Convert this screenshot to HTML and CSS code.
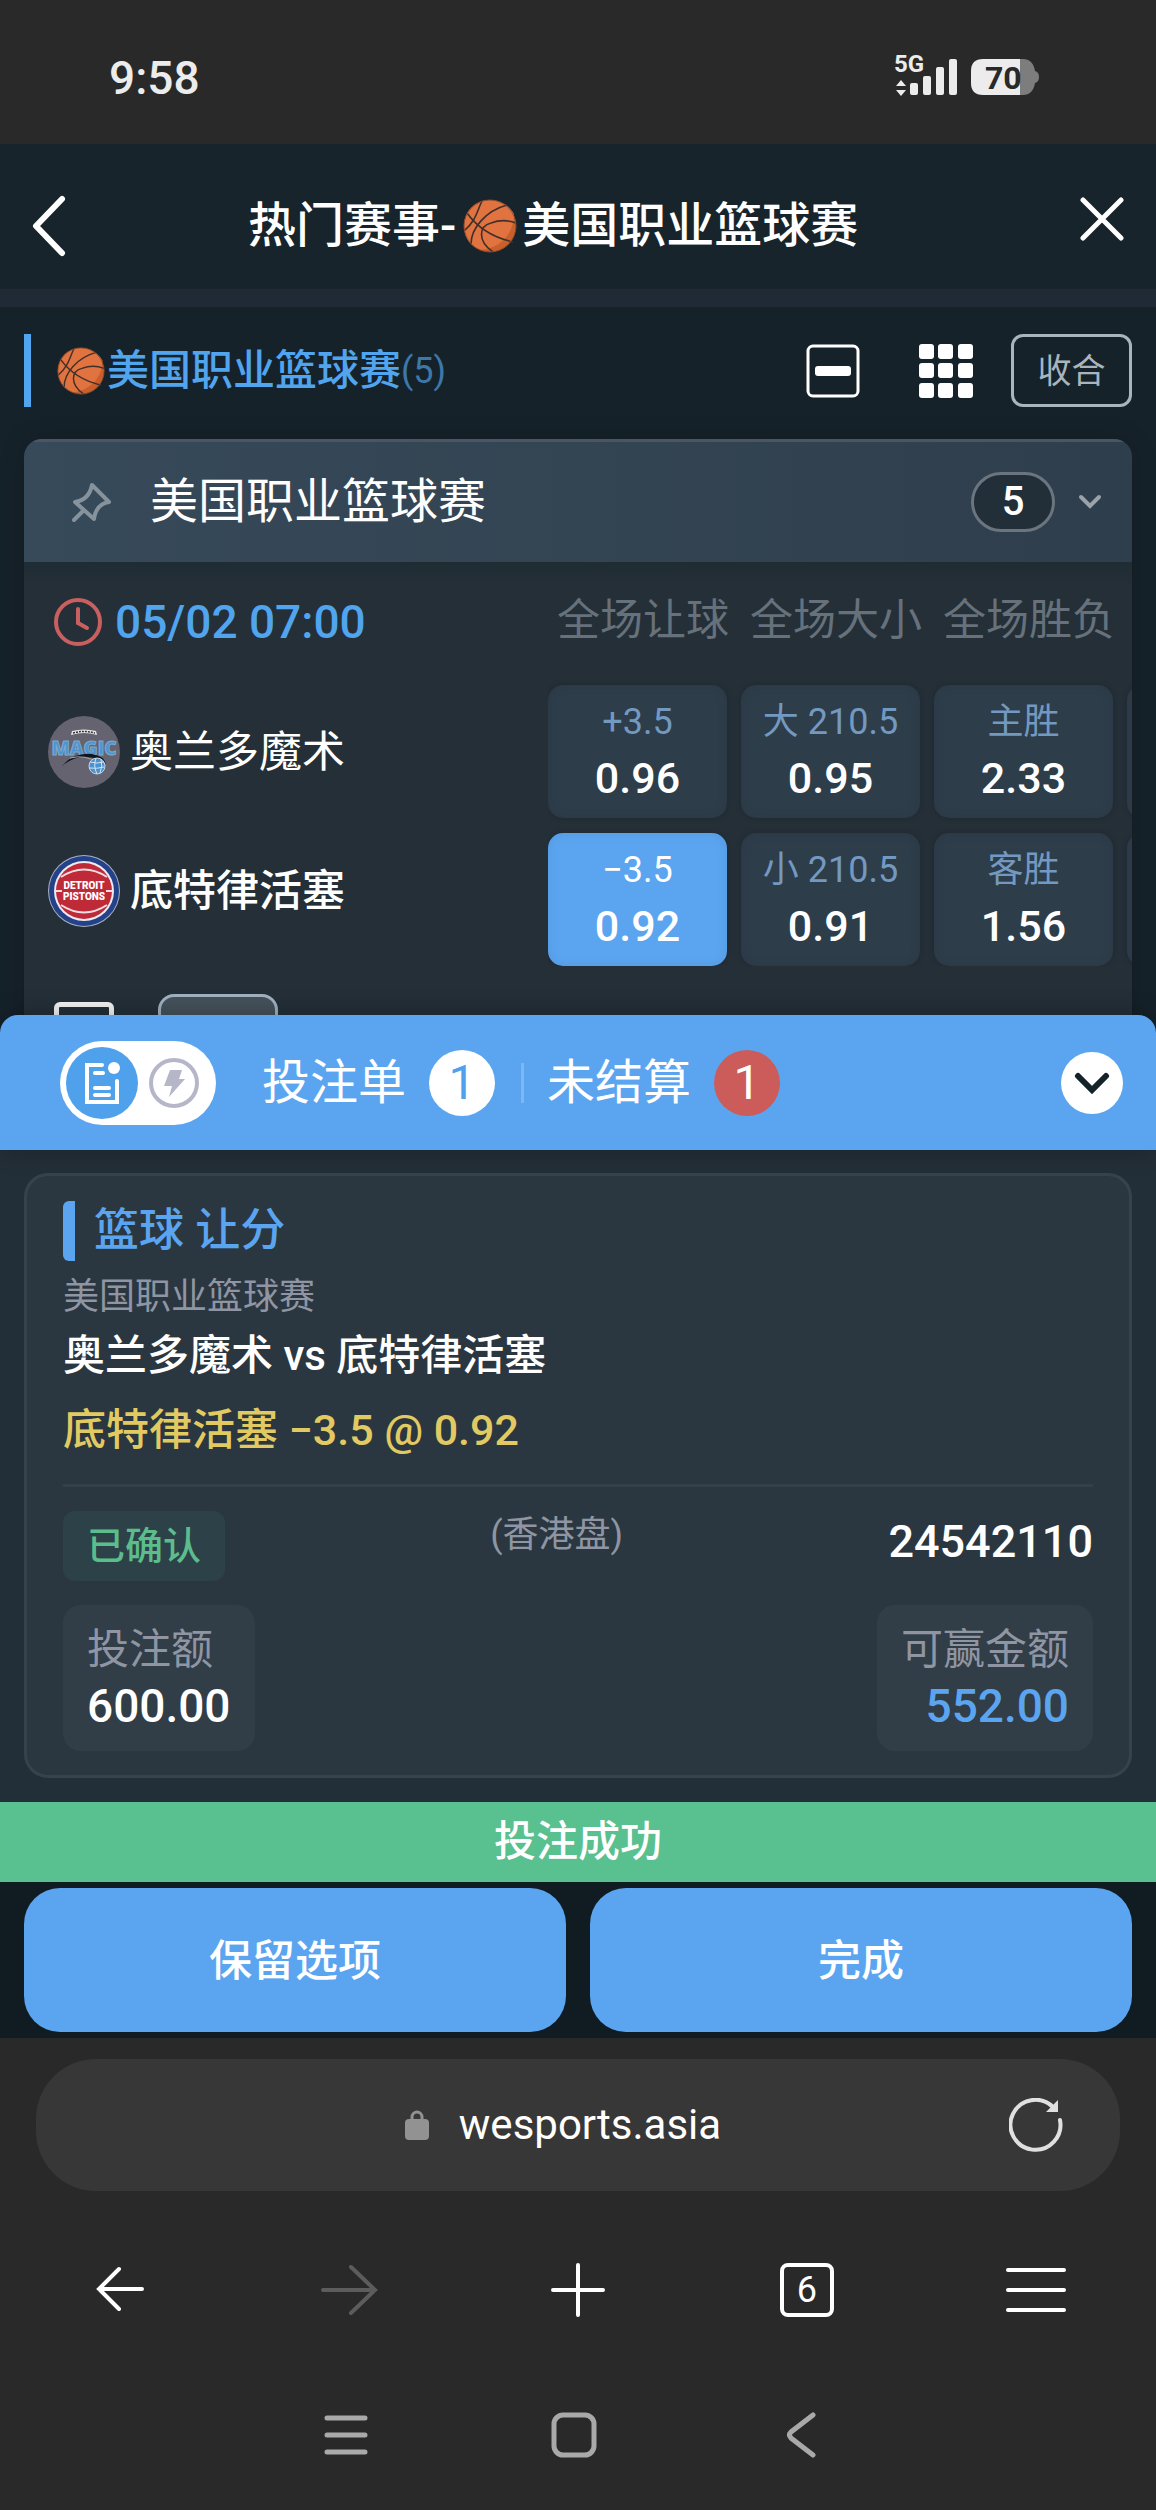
FILE: index.html
```html
<!DOCTYPE html>
<html lang="zh-CN">
<head>
    <meta charset="UTF-8">
    <meta name="viewport" content="width=device-width, initial-scale=1.0">
    <title>热门赛事-美国职业篮球赛</title>
    <link rel="stylesheet" href="styles.css">
</head>
<body>
    <!-- shared basketball icon -->
    <svg class="symbols" aria-hidden="true">
        <symbol id="ball" viewBox="0 0 54 54">
            <circle cx="27" cy="27" r="26" fill="#c9602c"/>
            <path d="M27 1C12 1 1 12 1 27c0 12 7 21 17 24 19-2 33-16 33-36C46 6 37 1 27 1z" fill="#e0733f"/>
            <g fill="none" stroke="#40302a" stroke-width="1.6">
                <path d="M4 14C14 28 28 38 50 43"/>
                <path d="M19 2C14 12 13 22 1 32"/>
                <path d="M8 45C8 30 22 12 44 6"/>
                <path d="M30 53C14 42 16 27 28 24 36 21 45 21 53 24"/>
            </g>
            <circle cx="27" cy="27" r="26" fill="none" stroke="#8a4a2c" stroke-width="1"/>
        </symbol>
    </svg>

    <div class="status-bar">
        <span class="clock">9:58</span>
        <svg class="status-icons" viewBox="0 -8 150 64">
            <g fill="#ececec">
                <text class="net-label" x="0" y="18">5G</text>
                <path d="M7 26l5 6H2zM7 42l5-6H2z"/>
                <rect x="16" y="29" width="8" height="12" rx="2"/>
                <rect x="29" y="22" width="8" height="19" rx="2"/>
                <rect x="42" y="13" width="8" height="28" rx="2"/>
                <rect x="55" y="5" width="8" height="36" rx="2"/>
            </g>
            <path d="M126 5h3q10 0 12 12q4 1 4 6t-4 6q-2 12-12 12h-3z" fill="#7d7d7d"/>
            <path d="M126 5H89q-12 0-12 12v12q0 12 12 12h37z" fill="#ececec"/>
            <text class="battery-label" x="91" y="35">70</text>
        </svg>
    </div>

    <header class="page-header">
        <button class="icon-button" aria-label="返回">
            <svg class="back-icon" viewBox="0 0 34 62"><path d="M30 4L4 31l26 27"/></svg>
        </button>
        <h1 class="page-title">热门赛事-<svg class="title-ball"><use href="#ball"/></svg>美国职业篮球赛</h1>
        <button class="icon-button close" aria-label="关闭">
            <svg class="close-icon" viewBox="0 0 44 44"><path d="M3 3l38 38M41 3L3 41"/></svg>
        </button>
    </header>

    <main class="events">
        <div class="section-bar">
            <h2 class="section-title"><svg class="section-ball"><use href="#ball"/></svg>美国职业篮球赛<span class="count">(5)</span></h2>
            <button class="icon-button" aria-label="单列">
                <svg class="tool-icon" viewBox="0 0 54 54"><rect x="2" y="2" width="50" height="50" rx="5" fill="none" stroke="#fff" stroke-width="3"/><rect x="9" y="22" width="36" height="10" rx="3" fill="#fff"/></svg>
            </button>
            <button class="icon-button grid-button" aria-label="网格">
                <svg class="tool-icon" viewBox="0 0 54 54" fill="#fff">
                    <rect width="15" height="15" rx="3"/><rect x="19" width="15" height="15" rx="3"/><rect x="39" width="15" height="15" rx="3"/>
                    <rect y="19" width="15" height="15" rx="3"/><rect x="19" y="19" width="15" height="15" rx="3"/><rect x="39" y="19" width="15" height="15" rx="3"/>
                    <rect y="39" width="15" height="15" rx="3"/><rect x="19" y="39" width="15" height="15" rx="3"/><rect x="39" y="39" width="15" height="15" rx="3"/>
                </svg>
            </button>
            <button class="collapse-button">收合</button>
        </div>

        <section class="league">
            <div class="league-header">
                <svg class="pin-icon" viewBox="0 0 40 40"><path d="M20 3l17 17q-13 2-15 17L3 20q14-2 17-17zM12 28L2 38"/></svg>
                <h3 class="league-name">美国职业篮球赛</h3>
                <span class="league-count">5</span>
                <svg class="chevron-icon" viewBox="0 0 24 16"><path d="M3 3l9 9 9-9"/></svg>
            </div>
            <div class="match">
                <div class="match-info">
                    <div class="match-time">
                        <svg class="clock-icon" viewBox="0 0 48 48"><circle cx="24" cy="24" r="22"/><path d="M24 11v14l9 5"/></svg>
                        <time>05/02 07:00</time>
                    </div>
                    <div class="team">
                        <svg class="team-logo" viewBox="0 0 72 72">
                            <circle cx="36" cy="36" r="36" fill="#64636f"/>
                            <path d="M23 19q13-4 26 0l-1-4q-12-3-24 0z" fill="#e8e8ea"/>
                            <path d="M25 17q11-3 22 0" stroke="#333" stroke-width="1.5" stroke-dasharray="2 1" fill="none"/>
                            <text class="magic-text" x="36" y="39" text-anchor="middle">MAGIC</text>
                            <path d="M14 50q12-14 30-12 12 2 14 10-8-7-20-7-12-1-24 9z" fill="#10151b"/>
                            <path d="M22 42q16-4 28 5" stroke="#9fa8b3" fill="none"/>
                            <circle cx="49" cy="50" r="8" fill="#4b92cf" stroke="#c4d4e2"/>
                            <path d="M42 46q7 2 14 0M41 52q8 1 15-1M48 42q-3 8 1 16M53 43q2 7-1 14" stroke="#d5e3ef" fill="none"/>
                        </svg>
                        <span class="team-name">奥兰多魔术</span>
                    </div>
                    <div class="team away">
                        <svg class="team-logo" viewBox="0 0 72 72">
                            <circle cx="36" cy="36" r="36" fill="#a9b2c4"/>
                            <circle cx="36" cy="36" r="35" fill="#24428a"/>
                            <circle cx="36" cy="36" r="30" fill="#eeeaf0"/>
                            <circle cx="36" cy="36" r="28" fill="#bf2a38"/>
                            <path d="M13 22q23-15 46 0M13 50q23 15 46 0M7 36h7M58 36h7" fill="none" stroke="#f3dde2" stroke-width="2"/>
                            <text class="pistons-text" x="36" y="34" text-anchor="middle">DETROIT</text>
                            <text class="pistons-text" x="36" y="45" text-anchor="middle">PISTONS</text>
                        </svg>
                        <span class="team-name favourite">底特律活塞</span>
                    </div>
                </div>
                <div class="odds">
                    <span class="odds-head">全场让球</span>
                    <span class="odds-head">全场大小</span>
                    <span class="odds-head">全场胜负</span>
                    <span class="odds-head"></span>
                    <button class="odd"><span class="odd-label">+3.5</span><span class="odd-value">0.96</span></button>
                    <button class="odd"><span class="odd-label">大 210.5</span><span class="odd-value">0.95</span></button>
                    <button class="odd"><span class="odd-label">主胜</span><span class="odd-value">2.33</span></button>
                    <button class="odd" aria-label="更多"></button>
                    <button class="odd selected"><span class="odd-label">−3.5</span><span class="odd-value">0.92</span></button>
                    <button class="odd"><span class="odd-label">小 210.5</span><span class="odd-value">0.91</span></button>
                    <button class="odd"><span class="odd-label">客胜</span><span class="odd-value">1.56</span></button>
                    <button class="odd" aria-label="更多"></button>
                </div>
            </div>
            <div class="match-actions">
                <span class="action-box"></span>
                <span class="action-chip"></span>
            </div>
        </section>
    </main>

    <section class="slip">
        <div class="slip-bar">
            <div class="slip-toggle">
                <button class="toggle-option active" aria-label="投注单模式">
                    <svg class="list-icon" viewBox="0 0 36 44"><path d="M18 4H3v37h30V20M11 12h8M11 27h14M11 34h14" fill="none" stroke="#fff" stroke-width="4" stroke-linecap="round"/><circle cx="30" cy="7" r="6" fill="#fff"/></svg>
                </button>
                <button class="toggle-option" aria-label="快速投注">
                    <svg class="bolt-icon" viewBox="0 0 50 50"><circle cx="25" cy="25" r="23" fill="none" stroke="#b5b6c8" stroke-width="4"/><path d="M21 12h12l-3 9h6L20 39l3-11h-8z" fill="#b5b6c8"/></svg>
                </button>
            </div>
            <a class="slip-tab" href="#slip">投注单<span class="badge">1</span></a>
            <span class="tab-divider"></span>
            <a class="slip-tab" href="#open">未结算<span class="badge red">1</span></a>
            <button class="slip-close" aria-label="收起">
                <svg class="down-icon" viewBox="0 0 36 22"><path d="M4 4l14 14L32 4"/></svg>
            </button>
        </div>
        <div class="slip-body">
            <article class="bet">
                <h3 class="bet-type">篮球 让分</h3>
                <p class="bet-league">美国职业篮球赛</p>
                <p class="bet-match">奥兰多魔术 vs 底特律活塞</p>
                <p class="bet-pick">底特律活塞 −3.5 @ 0.92</p>
                <div class="bet-status">
                    <span class="confirmed">已确认</span>
                    <span class="odds-type">(香港盘)</span>
                    <span class="bet-id">24542110</span>
                </div>
                <div class="bet-amounts">
                    <div class="amount">
                        <span class="amount-label">投注额</span>
                        <span class="amount-value">600.00</span>
                    </div>
                    <div class="amount right">
                        <span class="amount-label">可赢金额</span>
                        <span class="amount-value blue">552.00</span>
                    </div>
                </div>
            </article>
        </div>
        <p class="success">投注成功</p>
        <div class="slip-buttons">
            <button class="action-button">保留选项</button>
            <button class="action-button">完成</button>
        </div>
    </section>

    <footer class="browser">
        <div class="address-bar">
            <button class="address">
                <svg class="lock-icon" viewBox="0 0 24 30"><rect y="9" width="24" height="21" rx="4" fill="#929292"/><path d="M7 11V7a5 5 0 0 1 10 0v4" fill="none" stroke="#929292" stroke-width="3"/></svg>
                wesports.asia
            </button>
            <button class="icon-button reload" aria-label="刷新">
                <svg class="reload-icon" viewBox="0 0 54 54"><path d="M51 22A25 25 0 1 1 44 9"/><path d="M49 2v12H37z" fill="#e0e0e0" stroke="none"/></svg>
            </button>
        </div>
        <nav class="browser-nav">
            <button class="icon-button" aria-label="后退"><svg class="nav-icon" viewBox="0 0 60 60"><path d="M52 29H9M29 9L9 29l20 20"/></svg></button>
            <button class="icon-button dim" aria-label="前进"><svg class="nav-icon" viewBox="0 0 60 60"><path d="M4 30h52M32 7l24 23-24 23"/></svg></button>
            <button class="icon-button" aria-label="新标签页"><svg class="nav-icon" viewBox="0 0 60 60"><path d="M30 5v50M5 30h50"/></svg></button>
            <button class="tab-count">6</button>
            <button class="icon-button" aria-label="菜单"><svg class="nav-icon" viewBox="0 0 60 60"><path d="M2 10h56M2 30h56M2 50h56"/></svg></button>
        </nav>
        <nav class="system-nav">
            <button class="icon-button" aria-label="最近任务"><svg class="system-icon" viewBox="0 0 46 46"><path d="M4 6h38M4 23h38M4 40h38"/></svg></button>
            <button class="icon-button" aria-label="主屏幕"><svg class="system-icon" viewBox="0 0 46 46"><rect x="3" y="3" width="40" height="40" rx="9"/></svg></button>
            <button class="icon-button" aria-label="返回上一页"><svg class="system-icon" viewBox="0 0 46 46"><path d="M34 3L12 20q-3 3 0 6l22 17"/></svg></button>
        </nav>
    </footer>
</body>
</html>
```

FILE: styles.css
```css
* {
    box-sizing: border-box;
}

body {
    margin: 0;
    background: #292929;
    color: #ffffff;
    font-family: Roboto, 'Noto Sans CJK SC', sans-serif;
    font-size: 42px;
}

h1, h2, h3, p {
    margin: 0;
}

button {
    margin: 0;
    padding: 0;
    border: none;
    background: none;
    color: inherit;
    font-family: inherit;
    cursor: pointer;
}

a {
    color: inherit;
    text-decoration: none;
}

svg {
    display: block;
    flex-shrink: 0;
}

.symbols {
    display: none;
}

.icon-button {
    display: flex;
    align-items: center;
    justify-content: center;
}

/* phone status bar */
.status-bar {
    display: flex;
    align-items: center;
    justify-content: space-between;
    height: 144px;
    padding: 12px 112px 0 109px;
}

.clock {
    font-size: 46px;
    font-weight: 500;
    color: #ececec;
}

.status-icons {
    width: 150px;
    height: 64px;
}

.net-label {
    font-size: 24px;
    font-weight: 700;
}

.battery-label {
    font-size: 32px;
    font-weight: 700;
    fill: #292929;
}

/* header */
.page-header {
    display: flex;
    align-items: center;
    justify-content: space-between;
    height: 163px;
    padding: 4px 32px 0;
    background: #17242b;
    border-bottom: 18px solid #1f2a36;
}

.back-icon {
    width: 34px;
    height: 62px;
    margin-top: 14px;
    fill: none;
    stroke: #ffffff;
    stroke-width: 6;
    stroke-linecap: round;
    stroke-linejoin: round;
}

.page-title {
    display: flex;
    align-items: center;
    margin: 14px auto 0 182px;
    font-size: 48px;
    line-height: 60px;
    font-weight: 500;
    white-space: nowrap;
}

.title-ball {
    width: 54px;
    height: 54px;
    margin: 0 5px 0 7px;
}

.close-icon {
    width: 44px;
    height: 44px;
    fill: none;
    stroke: #ffffff;
    stroke-width: 5;
    stroke-linecap: round;
}

/* event list */
.events {
    padding: 27px 24px 0;
    background: #16222a;
}

.section-bar {
    display: flex;
    align-items: center;
    height: 73px;
    padding-left: 26px;
    border-left: 7px solid #51a4ee;
}

.section-title {
    display: flex;
    align-items: center;
    margin-right: auto;
    color: #51a4ee;
    font-size: 42px;
    line-height: 60px;
    font-weight: 500;
}

.section-ball {
    width: 48px;
    height: 48px;
    margin-right: 2px;
}

.count {
    color: #3d78ab;
    font-weight: 400;
    font-size: 36px;
}

.tool-icon {
    width: 54px;
    height: 54px;
}

.grid-button {
    margin: 0 38px 0 59px;
}

.collapse-button {
    width: 121px;
    height: 73px;
    padding-bottom: 4px;
    border: 3px solid #a9b5bd;
    border-radius: 12px;
    color: #a9b5bd;
    font-size: 34px;
}

.league {
    margin-top: 32px;
    padding-bottom: 28px;
    overflow: hidden;
    border-radius: 18px 18px 0 0;
    background: #242f38;
    box-shadow: 0 0 24px rgba(0, 0, 0, 0.2);
}

.league-header {
    display: flex;
    align-items: center;
    height: 123px;
    padding: 0 30px 0 48px;
    border-top: 3px solid #485763;
    background: linear-gradient(90deg, #374a59, #2f3e4d);
}

.pin-icon {
    width: 40px;
    height: 40px;
    fill: none;
    stroke: #87939c;
    stroke-width: 4;
    stroke-linejoin: round;
    stroke-linecap: round;
}

.league-name {
    margin: 0 auto 0 38px;
    font-size: 48px;
    line-height: 60px;
    font-weight: 400;
}

.league-count {
    width: 84px;
    height: 60px;
    border: 3px solid #6a757f;
    border-radius: 30px;
    background: #232f38;
    font-size: 40px;
    line-height: 54px;
    font-weight: 500;
    text-align: center;
}

.chevron-icon {
    width: 24px;
    height: 16px;
    margin-left: 23px;
    fill: none;
    stroke: #9aa3aa;
    stroke-width: 4;
    stroke-linecap: round;
}

.match {
    display: flex;
    background: linear-gradient(#202c34, #242f38 24px);
}

.match-info {
    flex: 1;
    padding-left: 24px;
}

.match-time {
    display: flex;
    align-items: center;
    height: 116px;
    padding: 4px 0 0 6px;
    color: #51a4ee;
    font-size: 46px;
    font-weight: 500;
}

.clock-icon {
    width: 48px;
    height: 48px;
    margin-right: 13px;
    fill: none;
    stroke: #c9605f;
    stroke-width: 4;
    stroke-linecap: round;
}

.team {
    display: flex;
    align-items: center;
    height: 72px;
    margin-top: 38px;
}

.team.away {
    margin-top: 67px;
}

.team-logo {
    width: 72px;
    height: 72px;
    margin-right: 10px;
}

.magic-text {
    font-family: 'Open Sans', sans-serif;
    font-size: 19px;
    font-weight: 800;
    fill: #4d95d2;
    stroke: #7fa9cb;
    stroke-width: 1;
}

.pistons-text {
    font-size: 10px;
    font-weight: 900;
    fill: #ffffff;
}

.team-name {
    font-size: 43px;
    line-height: 60px;
}

.favourite {
    font-weight: 500;
}

.odds {
    display: grid;
    grid-template-columns: repeat(4, 179px);
    grid-template-rows: 108px 133px 133px;
    gap: 15px 14px;
    flex: 0 0 584px;
    overflow: hidden;
}

.odds-head {
    padding-left: 9px;
    color: #66717b;
    font-size: 43px;
    line-height: 116px;
    white-space: nowrap;
}

.odd {
    display: flex;
    flex-direction: column;
    align-items: center;
    justify-content: center;
    padding-bottom: 4px;
    border-radius: 15px;
    background: #2e3d4a;
    box-shadow: 0 0 6px rgba(0, 0, 0, 0.15), inset 0 0 12px rgba(0, 0, 0, 0.08);
}

.odd-label {
    color: #7399c0;
    font-size: 36px;
    line-height: 56px;
}

.odd-value {
    font-size: 43px;
    line-height: 56px;
    font-weight: 500;
}

.odd.selected {
    background: #5ba5f0;
}

.selected .odd-label {
    color: #ffffff;
}

.match-actions {
    display: flex;
    align-items: center;
    gap: 44px;
    padding: 28px 30px 0;
}

.action-box {
    width: 60px;
    height: 54px;
    border: 5px solid #f4f4f4;
    border-radius: 6px;
}

.action-chip {
    width: 120px;
    height: 70px;
    border: 3px solid #a0b1c2;
    border-radius: 16px;
    background: #45525b;
}

/* bet slip, slides up over the event list */
.slip {
    position: relative;
    margin-top: -77px;
}

.slip-bar {
    position: relative;
    display: flex;
    align-items: center;
    height: 135px;
    padding: 0 33px 0 60px;
    border-radius: 18px 18px 0 0;
    background: #5ba5f0;
    box-shadow: 0 0 24px rgba(0, 0, 0, 0.3);
}

.slip-toggle {
    display: flex;
    align-items: center;
    width: 156px;
    height: 84px;
    margin-right: 46px;
    padding: 6px;
    border-radius: 42px;
    background: #ffffff;
}

.toggle-option {
    display: flex;
    align-items: center;
    justify-content: center;
    width: 72px;
    height: 72px;
    border-radius: 50%;
}

.toggle-option.active {
    background: #4fa1ec;
}

.list-icon {
    width: 36px;
    height: 44px;
}

.bolt-icon {
    width: 50px;
    height: 50px;
}

.slip-tab {
    display: flex;
    align-items: center;
    font-size: 48px;
    line-height: 66px;
}

.badge {
    width: 66px;
    height: 66px;
    margin-left: 23px;
    border-radius: 50%;
    background: #ffffff;
    color: #4fa1ec;
    text-align: center;
}

.badge.red {
    background: #cc5c59;
    color: #ffffff;
}

.tab-divider {
    width: 3px;
    height: 40px;
    margin: 0 23px 0 26px;
    background: #7cb8f3;
}

.slip-close {
    display: flex;
    align-items: center;
    justify-content: center;
    width: 62px;
    height: 62px;
    margin-left: auto;
    border-radius: 50%;
    background: #ffffff;
}

.down-icon {
    width: 36px;
    height: 22px;
    fill: none;
    stroke: #14222a;
    stroke-width: 6;
    stroke-linecap: round;
}

.slip-body {
    padding: 23px 24px 24px;
    background: #232f38;
}

.bet {
    padding: 24px 36px;
    border: 3px solid #37434c;
    border-radius: 24px;
    background: #2b3740;
}

.bet-type {
    display: flex;
    align-items: center;
    gap: 19px;
    color: #5ba5f0;
    font-size: 45px;
    line-height: 62px;
    font-weight: 500;
}

.bet-type::before {
    content: '';
    width: 12px;
    height: 60px;
    border-radius: 6px 0 0 6px;
    background: #5ba5f0;
}

.bet-league {
    margin-top: 10px;
    color: #8f95a2;
    font-size: 36px;
    line-height: 50px;
}

.bet-match {
    margin-top: 4px;
    font-size: 42px;
    line-height: 60px;
    font-weight: 500;
}

.bet-pick {
    margin-top: 14px;
    color: #e2ca63;
    font-size: 43px;
    line-height: 60px;
    font-weight: 500;
}

.bet-status {
    display: flex;
    align-items: flex-start;
    justify-content: space-between;
    margin-top: 24px;
    padding-top: 24px;
    border-top: 3px solid #333f49;
}

.confirmed {
    padding: 0 24px;
    border-radius: 12px;
    background: #2d4248;
    color: #5bbd8c;
    font-size: 38px;
    line-height: 70px;
    font-weight: 500;
}

.odds-type {
    color: #8f95a2;
    font-size: 36px;
    line-height: 48px;
}

.bet-id {
    font-size: 45px;
    line-height: 62px;
    font-weight: 500;
}

.bet-amounts {
    display: flex;
    justify-content: space-between;
    margin-top: 24px;
}

.amount {
    display: flex;
    flex-direction: column;
    padding: 18px 24px 16px;
    border-radius: 18px;
    background: #313d47;
}

.amount.right {
    text-align: right;
}

.amount-label {
    color: #8f95a2;
    font-size: 42px;
    line-height: 54px;
}

.amount-value {
    font-size: 46px;
    line-height: 58px;
    font-weight: 500;
}

.blue {
    color: #5ba5f0;
}

.success {
    background: #59c08f;
    font-size: 42px;
    line-height: 80px;
    font-weight: 500;
    text-align: center;
}

.slip-buttons {
    display: flex;
    gap: 24px;
    padding: 6px 24px;
    background: #101c21;
}

.action-button {
    flex: 1;
    height: 144px;
    padding-bottom: 6px;
    border-radius: 36px;
    background: #5ba5f0;
    font-size: 43px;
    font-weight: 500;
}

/* browser bars */
.browser {
    padding-top: 21px;
}

.address-bar {
    display: flex;
    align-items: center;
    height: 132px;
    margin: 0 36px;
    padding: 0 57px 0 111px;
    border-radius: 60px;
    background: #373737;
}

.address {
    display: flex;
    flex: 1;
    align-items: center;
    justify-content: center;
    gap: 30px;
    padding-right: 30px;
    font-size: 42px;
    line-height: 60px;
}

.lock-icon {
    width: 24px;
    height: 30px;
}

.reload-icon {
    width: 54px;
    height: 54px;
    fill: none;
    stroke: #e0e0e0;
    stroke-width: 4;
    stroke-linecap: round;
}

.browser-nav {
    display: grid;
    grid-template-columns: repeat(5, 1fr);
    align-items: center;
    justify-items: center;
    height: 198px;
    padding: 0 6px;
}

.nav-icon {
    width: 60px;
    height: 60px;
    fill: none;
    stroke: #ffffff;
    stroke-width: 4;
    stroke-linecap: round;
}

.dim .nav-icon {
    stroke: #5c5c5c;
}

.tab-count {
    width: 54px;
    height: 54px;
    border: 4px solid #ffffff;
    border-radius: 8px;
    font-size: 36px;
    line-height: 44px;
}

.system-nav {
    display: flex;
    justify-content: center;
    gap: 182px;
    padding: 23px 8px 50px 0;
}

.system-icon {
    width: 46px;
    height: 46px;
    fill: none;
    stroke: #a9a9a9;
    stroke-width: 5;
    stroke-linecap: round;
}
```
